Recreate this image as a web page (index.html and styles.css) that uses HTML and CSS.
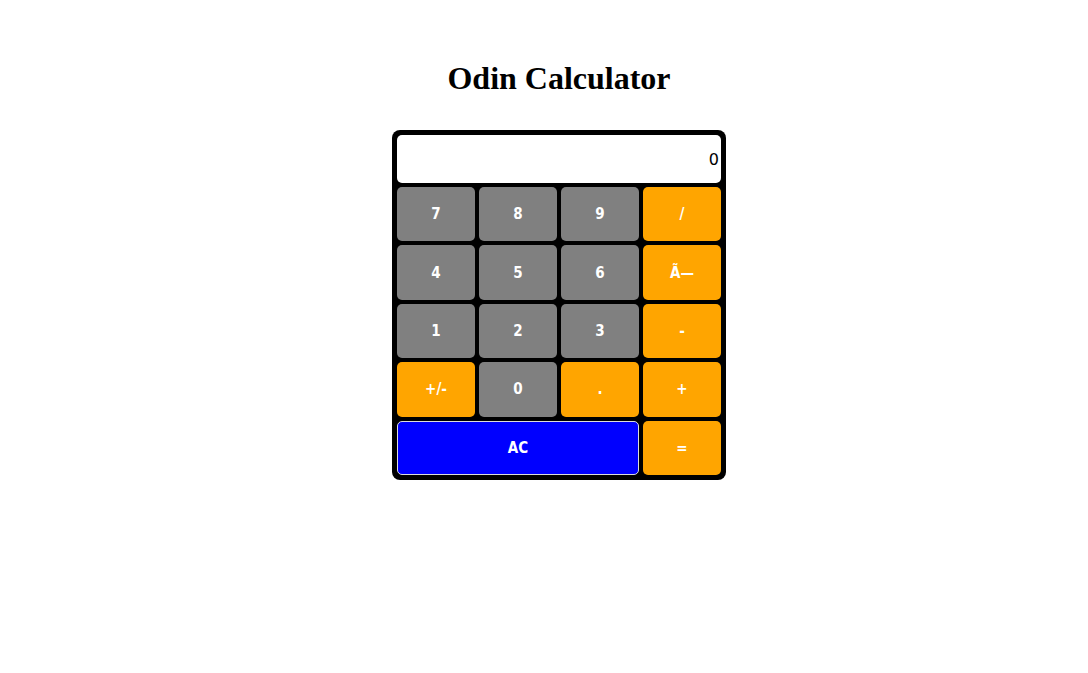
FILE: index.html
```html
<!DOCTYPE html>
<html>
<head>
<meta charset="utf-8">
<link rel="stylesheet" href="styles.css">
</head>
<body>
<div class="page">
  <h1 class="title">Odin Calculator</h1>
  <div class="calc">
    <div class="display">0</div>
    <div class="keys">
      <button class="key num">7</button>
      <button class="key num">8</button>
      <button class="key num">9</button>
      <button class="key op">/</button>
      <button class="key num">4</button>
      <button class="key num">5</button>
      <button class="key num">6</button>
      <button class="key op">Ã—</button>
      <button class="key num">1</button>
      <button class="key num">2</button>
      <button class="key num">3</button>
      <button class="key op">-</button>
      <button class="key op">+/-</button>
      <button class="key num">0</button>
      <button class="key op">.</button>
      <button class="key op">+</button>
      <button class="key clear">AC</button>
      <button class="key op">=</button>
    </div>
  </div>
</div>
</body>
</html>
```
FILE: styles.css
```css
html, body {
  margin: 0;
  padding: 0;
  background: #fff;
}
.page {
  display: flex;
  flex-direction: column;
  align-items: center;
  padding-left: 30px;
}
.title {
  font-family: "Liberation Serif", "Times New Roman", serif;
  font-size: 32px;
  font-weight: bold;
  line-height: 37px;
  margin: 60px 0 33px;
  color: #000;
}
.calc {
  width: 324px;
  padding: 5px;
  background: #000;
  border-radius: 8px;
  display: flex;
  flex-direction: column;
  gap: 4px;
}
.display {
  height: 48px;
  background: #fff;
  border-radius: 5px;
  display: flex;
  align-items: center;
  justify-content: flex-end;
  padding-right: 2px;
  font-family: "DejaVu Sans", sans-serif;
  font-size: 16px;
  color: #000;
}
.keys {
  display: grid;
  grid-template-columns: repeat(4, 78px);
  grid-auto-rows: 54.4px;
  gap: 4px;
}
.key {
  border: none;
  border-radius: 5px;
  color: #fff;
  font-family: "DejaVu Sans Condensed", "DejaVu Sans", sans-serif;
  font-weight: bold;
  font-size: 15px;
  padding: 0;
  margin: 0;
}
.num { background: #808080; }
.op { background: #ffa500; }
.clear {
  grid-column: span 3;
  background: #0000ff;
  border: 1px solid #ddd;
}
```
